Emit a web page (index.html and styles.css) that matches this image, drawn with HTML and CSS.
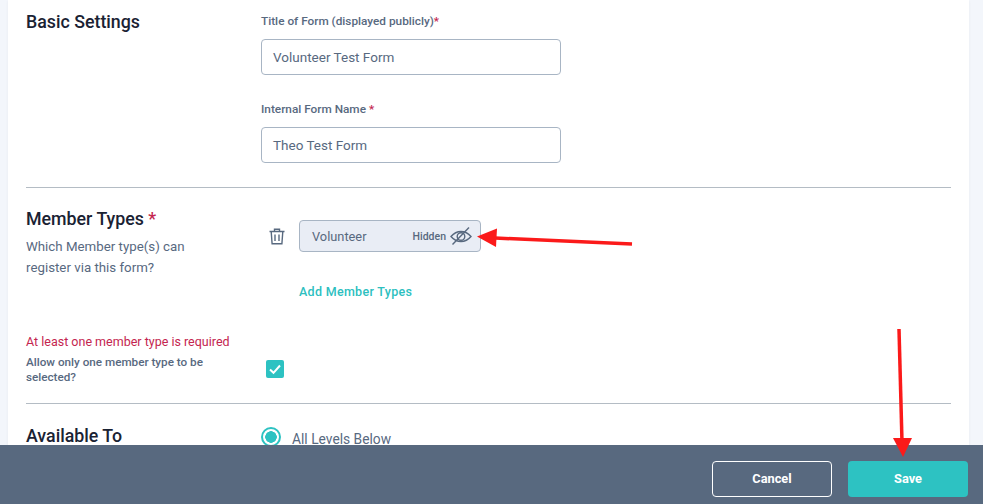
FILE: index.html
```html
<!DOCTYPE html>
<html lang="en">
<head>
<meta charset="utf-8">
<title>Form settings</title>
<link rel="stylesheet" href="styles.css">
</head>
<body>
<main class="card">
  <section class="row row-basic">
    <div class="side"><h2>Basic Settings</h2></div>
    <div class="fields">
      <div class="field">
        <label class="label">Title of Form (displayed publicly)<span class="req">*</span></label>
        <div class="input">Volunteer Test Form</div>
      </div>
      <div class="field">
        <label class="label">Internal Form Name <span class="req">*</span></label>
        <div class="input">Theo Test Form</div>
      </div>
    </div>
  </section>
  <section class="row row-types">
    <div class="side">
      <h2>Member Types <span class="req">*</span></h2>
      <p class="hint">Which Member type(s) can<br>register via this form?</p>
    </div>
    <div class="types">
      <div class="type-line">
        <svg class="trash" width="16" height="17" viewBox="0 0 16 17" fill="none" stroke="#58697f" stroke-width="1.4"><path d="M0.5 3.5h15M5.5 3.2V1.2h5v2M2.2 3.5l.9 12.3h9.8l.9-12.3M6 6.5v6.5M10 6.500v6.500"/></svg>
        <div class="chip">
          <span class="chip-name">Volunteer</span>
          <span class="chip-state">Hidden</span>
          <svg width="22" height="20" viewBox="0 0 22 20" fill="none" stroke="#58697f" stroke-width="1.4"><path d="M1 10.500C4 7 7.500 5.500 11 5.500s7 1.500 10 5c-3 3.500-6.500 5-10 5s-7-1.500-10-5z"/><circle cx="11" cy="10.500" r="3.800"/><path d="M2.500 18.500L19 1.500"/></svg>
        </div>
      </div>
      <a class="add-link">Add Member Types</a>
    </div>
  </section>
  <section class="row-allow">
    <p class="error">At least one member type is required</p>
    <div class="allow-line">
      <p class="allow-text">Allow only one member type to be selected?</p>
      <span class="check"><svg width="18" height="18" viewBox="0 0 18 18" fill="none" stroke="#fff" stroke-width="2"><path d="M4 9.500l3.500 3.300L14 5.500"/></svg></span>
    </div>
  </section>
  <section class="row row-avail">
    <div class="side"><h2>Available To</h2></div>
    <div class="radio-line"><span class="radio"></span><span class="radio-text">All Levels Below</span></div>
  </section>
</main>

<footer class="footer">
  <button class="btn btn-cancel">Cancel</button>
  <button class="btn btn-save">Save</button>
</footer>

<svg class="arrows" width="983" height="504" viewBox="0 0 983 504">
  <path d="M632 244L495 238" stroke="#fb1a1a" stroke-width="3.500" fill="none"/>
  <path d="M477 236.500L497 228.500L496 247z" fill="#fb1a1a"/>
  <path d="M899 329L902 442" stroke="#fb1a1a" stroke-width="3.500" fill="none"/>
  <path d="M893 438H912L903 457z" fill="#fb1a1a"/>
</svg>
</body>
</html>
```

FILE: styles.css
```css
* { box-sizing: border-box; }
html, body { margin: 0; height: 504px; overflow: hidden; }
body {
  position: relative;
  background: #f3f6fb;
  font-family: Roboto, "Liberation Sans", sans-serif;
  color: #58697f;
  padding: 0 14px 0 8px;
}
.card {
  background: #fff;
  height: 504px;
  padding: 0 18px;
  box-shadow: 0 1px 3px rgba(0, 0, 0, 0.05);
  overflow: hidden;
}
h2 {
  margin: 1px 0 0;
  font-size: 17.800px;
  line-height: 20px;
  font-weight: 500;
  color: #1a2233;
}
.row { display: flex; }
.side { width: 235px; flex: none; }
.row-basic { padding-top: 11px; height: 188px; border-bottom: 1px solid #b4bcc4; }
.field { margin-bottom: 26px; }
.label {
  display: block;
  font-size: 11.800px;
  line-height: 16px;
  font-weight: 500;
  color: #58697f;
  margin-bottom: 10px;
  margin-top: 2px;
}
.req { color: #c4254f; }
.input {
  width: 300px;
  height: 36px;
  border: 1px solid #a8b5c4;
  border-radius: 4px;
  padding: 0 11px;
  font-size: 13.500px;
  line-height: 34px;
  color: #58697f;
}
.row-types { padding-top: 20px; height: 131px; }
.hint { margin: 7px 0 0; font-size: 13.300px; line-height: 21px; color: #58697f; }
.types { padding-top: 11px; }
.type-line { display: flex; align-items: center; gap: 14px; margin-left: 8px; margin-top: 1px; }
.chip {
  width: 182px;
  height: 32px;
  display: flex;
  align-items: center;
  padding: 0 8px 0 12px;
  background: #e9edf5;
  border: 1px solid #a8b5c4;
  border-radius: 4px;
}
.chip-name { font-size: 12.800px; flex: 1; }
.chip-state { font-size: 10.500px; font-weight: 500; margin-right: 4px; }
.add-link {
  display: block;
  margin: 32px 0 0 38px;
  font-size: 12.500px;
  line-height: 16px;
  font-weight: 500;
  color: #2dbfbf;
  letter-spacing: 0.3px;
}
.row-allow { height: 85px; padding-top: 15px; border-bottom: 1px solid #b4bcc4; }
.error { margin: 0; font-size: 12.500px; line-height: 16px; color: #c4254f; }
.allow-line { display: flex; align-items: flex-start; margin-top: 5px; }
.allow-text {
  width: 240px;
  padding-right: 40px;
  margin: 0;
  font-size: 11.700px;
  line-height: 15px;
  font-weight: 500;
}
.check {
  width: 18px;
  height: 18px;
  margin-top: 5px;
  background: #2dc2c2;
  border-radius: 2px;
  display: block;
}
.check svg { display: block; }
.row-avail { padding-top: 21px; }
.radio-line { display: flex; align-items: center; gap: 11px; margin-top: 2px; }
.radio {
  width: 20px;
  height: 20px;
  border-radius: 50%;
  border: 2px solid #2dc2c2;
  background: radial-gradient(circle, #2dc2c2 0 5.500px, #fff 6px);
}
.radio-text { font-size: 13.800px; margin-top: 3px; }
.footer {
  position: absolute;
  left: 0;
  right: 0;
  top: 445px;
  height: 59px;
  background: #58697f;
  display: flex;
  justify-content: flex-end;
  gap: 16px;
  padding: 16px 15px 0 0;
}
.btn {
  width: 120px;
  height: 36px;
  border-radius: 4px;
  font-family: Roboto, "Liberation Sans", sans-serif;
  font-size: 12.800px;
  font-weight: 700;
  color: #fff;
  padding: 0 0 2px;
}
.btn-cancel { background: transparent; border: 1px solid #fff; }
.btn-save { background: #2dc2c2; border: 0; }
.arrows { position: absolute; left: 0; top: 0; pointer-events: none; }
```
